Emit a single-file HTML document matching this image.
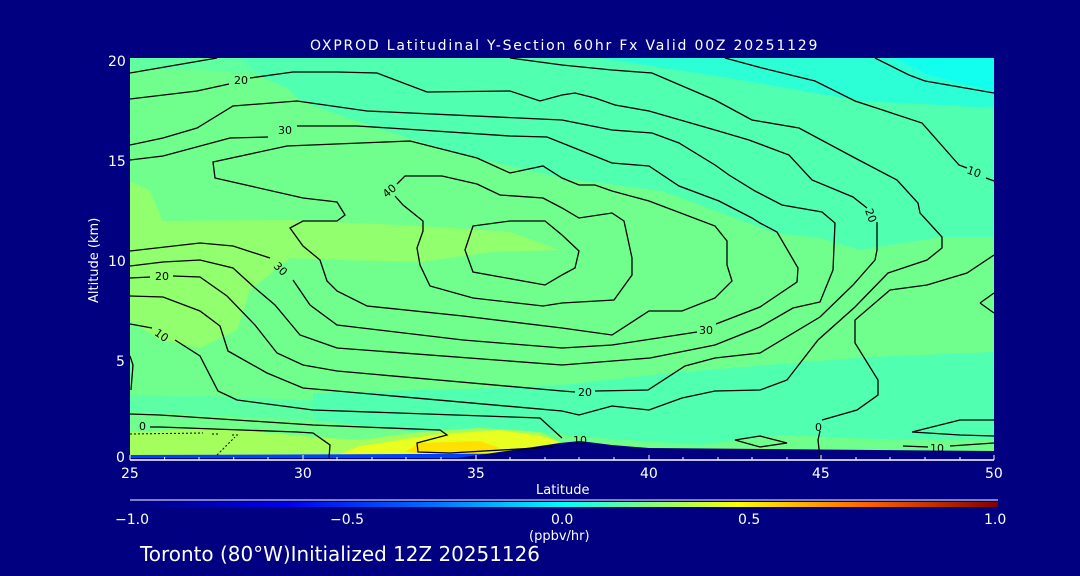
<!DOCTYPE html>
<html><head><meta charset="utf-8"><style>
body{margin:0;background:#000080;width:1080px;height:576px;overflow:hidden;}
svg{position:absolute;left:0;top:0}
text{fill:#fff;font-family:"DejaVu Sans","Liberation Sans",sans-serif}
.k{fill:#000}
</style></head><body>
<svg width="1080" height="576" viewBox="0 0 1080 576">
<defs>
<linearGradient id="cb" x1="0" x2="1">
<stop offset="0" stop-color="#000080"/><stop offset="0.18" stop-color="#0000e8"/><stop offset="0.35" stop-color="#0070ff"/><stop offset="0.5" stop-color="#00ffff"/><stop offset="0.6" stop-color="#80ff80"/><stop offset="0.7" stop-color="#ffff00"/><stop offset="0.85" stop-color="#ff6000"/><stop offset="1" stop-color="#800000"/>
</linearGradient>
<clipPath id="pc"><rect x="130" y="58" width="864" height="400"/></clipPath>
</defs>
<g clip-path="url(#pc)">
<rect x="130" y="58" width="864" height="400" fill="#70ff8c"/>
<path d="M130 58 L994 58 L994 237 L942 237 L878 247 L860 250 L820 238 L775 233 L662 191 L562 178 L463 155 L377 128 L300 101 L287 88 L257 75 L220 66 L130 66 Z" fill="#50ffb0"/>
<path d="M130 58 L240 58 L260 75 L200 70 L130 70Z" fill="#60ffa0"/>
<path d="M600 58 L994 58 L994 108 L862 101 L729 78 Z" fill="#2cffd6"/>
<path d="M895 58 L994 58 L994 91 L929 75 Z" fill="#12fff0"/>
<path d="M130 181 L150 191 L163 221 L290 220 L420 226 L510 232 L560 250 L492 252 L420 262 L340 260 L290 258 L250 290 L237 330 L200 348 L160 340 L130 320 Z" fill="#92ff6e"/>
<path d="M313 393 L500 388 L562 385 L680 372 L870 357 L994 352 L994 440 L900 440 L780 435 L700 445 L600 438 L520 430 L420 432 L313 420 Z" fill="#50ffb0"/>
<path d="M130 395 L200 396 L313 400 L313 420 L200 415 L130 412Z" fill="#5cffa4"/>
<path d="M130 432 L220 428 L300 436 L360 440 L420 432 L480 428 L540 432 L560 442 L520 458 L130 458 Z" fill="#a4ff5c"/>
<path d="M330 458 L360 446 L400 440 L440 434 L500 430 L540 436 L560 442 L520 458 Z" fill="#e8ff20"/>
<path d="M405 452 L420 443 L480 441 L500 448 L470 455 Z" fill="#ffe000"/>
<path d="M130 455 L994 452 L994 458 L130 458 Z" fill="#0040ff"/>
<path d="M457 458 L513 450 L560 443 L580 441 L612 445 L649 448 L994 451 L994 458 Z" fill="#000080"/>
<g fill="none" stroke="#000" stroke-width="1.3">
<path d="M130 73 L217 58"/>
<path d="M510 58 L562 65 L612 70 L652 73 L715 100 L752 120 L799 128 L855 158 L897 180 L918 203 L920 213 L942 237 L942 248 L927 260 L888 273 L855 307 L818 340 L787 380 L760 390 L715 391 L682 398 L649 410 L612 406 L579 415 L562 411 L303 388 L267 373 L228 351 L220 326 L200 311 L163 297 L130 296"/>
<path d="M725 58 L762 68 L815 81 L855 101 L922 123 L959 165 L967 168 M986 178 L994 181"/>
<path d="M875 58 L909 75 L925 81 L994 93"/>
<path d="M130 99 L197 91 L229 84 M250 78 L293 72 L337 72 L377 73 L427 92 L510 91 L540 101 L562 95 L575 93 L595 98 L615 105 L649 111 L715 130 L749 140 L789 155 L812 180 L853 197 L867 208 M877 222 L877 250 L875 260 L853 285 L820 317 L760 353 L715 358 L685 366 L648 390 L595 391 M575 392 L562 391 L337 371 L303 365 L277 353 L255 325 L227 296 L200 277 L173 276 M150 277 L130 278"/>
<path d="M130 145 L163 138 L197 128 L233 106 L297 101 L367 111 L562 120 L612 130 L652 133 L679 143 L715 165 L729 175 L755 191 L782 205 L822 212 L835 223 L833 270 L820 302 L793 308 L760 327 L715 345 L650 358 L562 365 L337 348 L300 335 L275 305 L255 288 L233 268 L200 260 L163 262 L130 266"/>
<path d="M130 160 L163 156 L230 138 L268 137 M297 126 L357 126 L420 130 L510 136 L547 137 L562 143 L612 163 L649 166 L679 186 L719 201 L752 218 L760 223 L777 232 L798 268 L797 282 L760 307 L716 324 M697 332 L645 340 L612 345 L562 348 L463 340 L337 325 L310 305 L293 280 M270 258 L233 246 L200 243 L130 251"/>
<path d="M213 162 L287 146 L410 141 L477 158 L510 173 L543 166 L562 178 L579 185 L595 185 L612 191 L649 201 L715 226 L727 241 L727 265 L732 281 L715 298 L682 311 L649 311 L612 335 L562 328 L463 316 L367 306 L337 291 L327 281 L320 260 L303 246 L290 228 L303 221 L337 221 L345 215 L337 202 L303 198 L215 178 Z"/>
<path d="M397 184 L405 176 L442 176 L477 184 L500 195 L543 198 L562 208 L579 218 L612 213 L624 221 L632 258 L632 275 L614 300 L562 303 L543 306 L473 298 L430 286 L420 265 L417 248 L423 231 L423 221 L403 205 L395 196"/>
<path d="M473 226 L510 221 L545 221 L562 235 L579 251 L575 268 L562 275 L545 285 L473 272 L465 250 Z"/>
<path d="M994 255 L967 273 L927 285 L890 290 L855 320 L855 343 L878 380 L878 395 L857 410 L822 420 M820 431 L818 440 L820 458"/>
<path d="M980 303 L994 293 M980 303 L994 313"/>
<path d="M130 324 L152 328 M175 340 L200 356 L218 391 L237 400 L313 410 L540 418 L562 438"/>
<path d="M130 356 L133 365 L131 390"/>
<path d="M130 414 L160 415 L267 422 L313 425 L440 430 L447 435 L417 443 L418 452 L450 453 L553 447"/>
<path d="M150 427 L160 427 L297 432 L313 433 L330 445 L329 458"/>
<path d="M735 440 L760 436 L787 443 L760 447 Z"/>
<path d="M912 432 L960 420 L994 420 M912 432 L960 435 L994 436 M903 446 L928 447 M950 446 L994 443"/>
<path d="M130 434 L203 433 M212 434 L220 434 M232 435 L238 435 M217 455 L235 437" stroke-dasharray="2 2" stroke-width="1"/>
</g>
<g font-size="11" font-family="DejaVu Sans">
<text class="k" x="234" y="84">20</text><text class="k" x="278" y="134">30</text>
<text class="k" x="382" y="194" transform="rotate(-40 390 190)">40</text><text class="k" x="155" y="280">20</text>
<text class="k" x="274" y="272" transform="rotate(45 280 268)">30</text><text class="k" x="155" y="338" transform="rotate(35 160 334)">10</text>
<text class="k" x="699" y="334">30</text><text class="k" x="578" y="396">20</text>
<text class="k" x="967" y="176" transform="rotate(20 975 172)">10</text><text class="k" x="865" y="220" transform="rotate(70 872 215)">20</text>
<text class="k" x="139" y="430">0</text><text class="k" x="573" y="444">10</text>
<text class="k" x="930" y="452">10</text><text class="k" x="815" y="431">0</text>
</g>
</g>
<line x1="130" y1="460" x2="994" y2="460" stroke="#fff" stroke-width="1.5"/>
<g stroke="#fff" stroke-width="1">
<path d="M130 460v-5M164.6 460v-3M199 460v-3M233.7 460v-3M268 460v-3M303 460v-5M337 460v-3M372 460v-3M406 460v-3M441 460v-3M476 460v-5M510 460v-3M545 460v-3M579 460v-3M614 460v-3M649 460v-5M683 460v-3M718 460v-3M752 460v-3M787 460v-3M821 460v-5M856 460v-3M890 460v-3M925 460v-3M960 460v-3M994 460v-5"/>
</g>
<g font-size="14" font-family="Liberation Sans">
<text x="310" y="50" style="letter-spacing:1.8px">OXPROD Latitudinal Y-Section 60hr  Fx Valid 00Z 20251129</text>
<text x="108" y="66">20</text><text x="108" y="166">15</text><text x="108" y="266">10</text><text x="116" y="366">5</text><text x="116" y="462">0</text>
<text x="121" y="478">25</text><text x="294" y="478">30</text><text x="467" y="478">35</text><text x="640" y="478">40</text><text x="812" y="478">45</text><text x="985" y="478">50</text>
<text x="536" y="494" font-size="13">Latitude</text>
<text x="98" y="303" font-size="13" transform="rotate(-90 98 303)">Altitude (km)</text>
<text x="115" y="524">−1.0</text><text x="330" y="524">−0.5</text><text x="551" y="524">0.0</text><text x="738" y="524">0.5</text><text x="984" y="524">1.0</text>
<text x="529" y="540" font-size="13">(ppbv/hr)</text>
<text x="140" y="561" font-size="20" textLength="400" lengthAdjust="spacingAndGlyphs">Toronto (80°W)Initialized 12Z 20251126</text>
</g>
<line x1="130" y1="500" x2="998" y2="500" stroke="#fff"/>
<rect x="130" y="502" width="868" height="5" fill="url(#cb)"/>
</svg>
</body></html>
